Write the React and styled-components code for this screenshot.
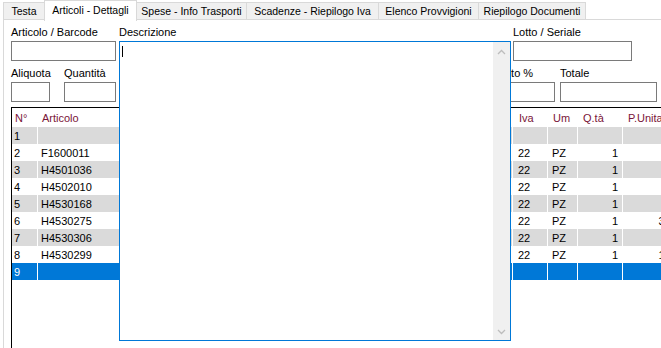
import React from 'react';
import styled, {createGlobalStyle} from 'styled-components';

const GlobalStyle = createGlobalStyle`
  html, body {
    margin: 0;
    padding: 0;
    background: #FFFFFF;
  }
  body {
    font-family: "Liberation Sans", Arial, sans-serif;
    font-size: 11px;
    color: #000000;
    overflow: hidden;
  }
`

const Window = styled.div`
  width: 661px;
  height: 348px;
  overflow: hidden;
  position: relative;
  background: #FFFFFF;
`

const TabStrip = styled.div`
  display: flex;
  align-items: flex-end;
  height: 19px;
  padding-left: 3px;
  position: relative;
  z-index: 2;
`

const Tab = styled.div`
  box-sizing: border-box;
  width: ${(p) => p.$w}px;
  height: ${(p) => (p.$active ? 21 : 17)}px;
  margin-left: ${(p) => (p.$first ? 0 : -1)}px;
  margin-bottom: ${(p) => (p.$active ? -2 : 0)}px;
  border: 1px solid #D9D9D9;
  border-bottom: none;
  background: ${(p) => (p.$active ? '#FFFFFF' : '#F0F0F0')};
  display: flex;
  align-items: center;
  justify-content: center;
  padding-bottom: ${(p) => (p.$active ? 3 : 0)}px;
  font-size: 10.5px;
  white-space: nowrap;
  position: relative;
  z-index: ${(p) => (p.$active ? 1 : 0)};
`

const Panel = styled.div`
  box-sizing: border-box;
  margin-left: 3px;
  height: 329px;
  border-top: 1px solid #D9D9D9;
  border-left: 1px solid #D9D9D9;
  padding: 6px 0 0 7px;
  display: flex;
  flex-direction: column;
`

const FieldRow = styled.div`
  display: flex;
  align-items: flex-start;
  margin-top: ${(p) => p.$mt || 0}px;
`

const Field = styled.div`
  display: flex;
  flex-direction: column;
  width: ${(p) => p.$w}px;
  margin-left: ${(p) => p.$ml || 0}px;
  flex-shrink: 0;
  position: relative;
`

const Label = styled.div`
  height: 13px;
  line-height: 13px;
  margin-bottom: 2px;
  white-space: nowrap;
`

const TextBox = styled.div`
  box-sizing: border-box;
  height: 20px;
  border: 1px solid #7A7A7A;
  background: #FFFFFF;
`

const Popup = styled.div`
  position: absolute;
  top: 15px;
  left: 0;
  box-sizing: border-box;
  width: 100%;
  height: 300px;
  border: 1px solid #0078D7;
  background: #FFFFFF;
  display: flex;
  z-index: 5;
`

const PopupText = styled.div`
  flex: 1;
  padding: 4px 2px;
`

const Caret = styled.div`
  width: 1px;
  height: 11px;
  background: #000000;
`

const ScrollBar = styled.div`
  width: 17px;
  background: #F0F0F0;
  display: flex;
  flex-direction: column;
  justify-content: space-between;
  align-items: center;
  padding: 7px 0 5px;
`

const GridBox = styled.div`
  margin-top: 5px;
  flex: 1;
  border-top: 1px solid #000000;
  border-left: 1px solid #000000;
  overflow: hidden;
`

const Grid = styled.div`
  display: grid;
  grid-template-columns: 25px 120px 353px 34px 29px 44px 67px 80px;
  grid-template-rows: 19px;
  grid-auto-rows: 17px;
  column-gap: 1px;
  width: max-content;
  background: #FFFFFF;
`

const Cell = styled.div`
  background: ${(p) => p.$bg};
  color: ${(p) => p.$color};
  padding: 0 ${(p) => p.$pad}px;
  display: flex;
  align-items: center;
  justify-content: ${(p) => (p.$right ? 'flex-end' : 'flex-start')};
  white-space: nowrap;
  overflow: hidden;
`

const Chevron = ({up}) => (
  <svg width="9" height="6" viewBox="0 0 9 6">
    <path
      d={up ? 'M1 5 L4.5 1.5 L8 5' : 'M1 1 L4.5 4.5 L8 1'}
      fill="none"
      stroke="#BDBDBD"
      strokeWidth="1.3"
    />
  </svg>
)

const tabs = [
  {t: 'Testa', w: 42},
  {t: 'Articoli - Dettagli', w: 93, active: true},
  {t: 'Spese - Info Trasporti', w: 111},
  {t: 'Scadenze - Riepilogo Iva', w: 133},
  {t: 'Elenco Provvigioni', w: 101},
  {t: 'Riepilogo Documenti', w: 108},
]

const columns = [
  {h: 'N°', pad: 2},
  {h: 'Articolo', pad: 3},
  {h: 'Descrizione', pad: 3},
  {h: 'Iva', pad: 5},
  {h: 'Um', pad: 4},
  {h: 'Q.tà', pad: 4, right: true},
  {h: 'P.Unitario', pad: 4, right: true},
  {h: 'Sconto', pad: 4, right: true},
]

const rows = [
  ['1', '', '', '', '', '', '', ''],
  ['2', 'F1600011', '', '22', 'PZ', '1', '8,50', ''],
  ['3', 'H4501036', '', '22', 'PZ', '1', '6,20', ''],
  ['4', 'H4502010', '', '22', 'PZ', '1', '4,90', ''],
  ['5', 'H4530168', '', '22', 'PZ', '1', '7,80', ''],
  ['6', 'H4530275', '', '22', 'PZ', '1', '32,40', ''],
  ['7', 'H4530306', '', '22', 'PZ', '1', '5,60', ''],
  ['8', 'H4530299', '', '22', 'PZ', '1', '12,30', ''],
  ['9', '', '', '', '', '', '', ''],
]

export default function App() {
  return (
    <Window>
      <GlobalStyle/>
      <TabStrip>
        {tabs.map((t, i) => (
          <Tab key={t.t} $w={t.w} $active={t.active} $first={i === 0}>{t.t}</Tab>
        ))}
      </TabStrip>
      <Panel>
        <FieldRow>
          <Field $w={105}>
            <Label>Articolo / Barcode</Label>
            <TextBox/>
          </Field>
          <Field $w={392} $ml={3}>
            <Label>Descrizione</Label>
            <TextBox/>
            <Popup>
              <PopupText><Caret/></PopupText>
              <ScrollBar>
                <Chevron up/>
                <Chevron/>
              </ScrollBar>
            </Popup>
          </Field>
          <Field $w={119} $ml={2}>
            <Label>Lotto / Seriale</Label>
            <TextBox/>
          </Field>
        </FieldRow>
        <FieldRow $mt={6}>
          <Field $w={39}>
            <Label>Aliquota</Label>
            <TextBox/>
          </Field>
          <Field $w={52} $ml={14}>
            <Label>Quantità</Label>
            <TextBox/>
          </Field>
          <Field $w={118} $ml={3}>
            <Label>Prezzo</Label>
            <TextBox/>
          </Field>
          <Field $w={120} $ml={3}>
            <Label>Imponibile</Label>
            <TextBox/>
          </Field>
          <Field $w={120} $ml={3}>
            <Label>Provvigione</Label>
            <TextBox/>
          </Field>
          <Field $w={69} $ml={3}>
            <Label>Sconto %</Label>
            <TextBox/>
          </Field>
          <Field $w={97} $ml={5}>
            <Label>Totale</Label>
            <TextBox/>
          </Field>
        </FieldRow>
        <GridBox>
          <Grid>
            {columns.map((c) => (
              <Cell key={c.h} $bg="#FFFFFF" $color="#7A1538" $pad={c.pad + 1}>{c.h}</Cell>
            ))}
            {rows.map((r, ri) => {
              const selected = ri === rows.length - 1
              const bg = selected ? '#0078D7' : ri % 2 === 0 ? '#DADADA' : '#FFFFFF'
              const color = selected ? '#FFFFFF' : '#000000'
              return r.map((v, ci) => (
                <Cell
                  key={ri + '-' + ci}
                  $bg={bg}
                  $color={color}
                  $pad={columns[ci].pad}
                  $right={columns[ci].right}
                >
                  {v}
                </Cell>
              ))
            })}
          </Grid>
        </GridBox>
      </Panel>
    </Window>
  )
}
